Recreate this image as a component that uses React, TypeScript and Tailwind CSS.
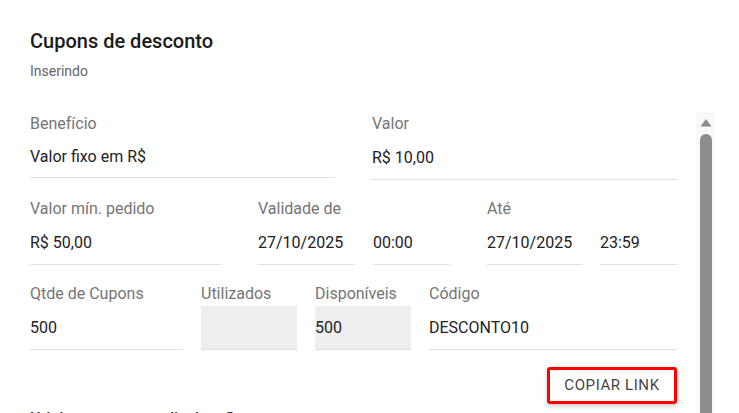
import React from 'react'

const font = { fontFamily: 'Roboto, "Liberation Sans", Arial, sans-serif' }

function Label({ children }: { children?: React.ReactNode }) {
  return (
    <div className="h-5 leading-5 mb-[2px] text-base text-[#757575] whitespace-nowrap">
      {children}
    </div>
  )
}

function Input({ value, disabled, short }: { value?: string; disabled?: boolean; short?: boolean }) {
  return (
    <div
      className={`${short ? 'h-[42px]' : 'h-[44px]'} flex items-center border-b border-[#e0e0e0] text-base leading-5 text-[#222] whitespace-nowrap ${
        disabled ? 'bg-[#eeeeee]' : ''
      }`}
    >
      {value}
    </div>
  )
}

function Field({ label, value, disabled, short }: { label: string; value?: string; disabled?: boolean; short?: boolean }) {
  return (
    <div>
      <Label>{label}</Label>
      <Input value={value} disabled={disabled} short={short} />
    </div>
  )
}

function DateTime({ label, date, time }: { label: string; date: string; time: string }) {
  return (
    <div>
      <Label>{label}</Label>
      <div className="grid grid-cols-[1fr_77px] gap-[18px]">
        <Input value={date} />
        <Input value={time} />
      </div>
    </div>
  )
}

export default function App() {
  return (
    <div className="w-[739px] h-[413px] overflow-hidden bg-white" style={font}>
      {/* Cabeçalho */}
      <div className="pl-[30px] pt-[29px]">
        <h1 className="text-[20px] leading-6 font-medium text-[#1a1a1a]">Cupons de desconto</h1>
        <p className="mt-2 text-sm leading-5 text-[#666]">Inserindo</p>
      </div>

      <div className="flex mt-[31px]">
        {/* Formulário */}
        <div className="w-[647px] ml-[30px] pt-[2px]">
          <div className="grid grid-cols-2 gap-[37px]">
            <Field label="Benefício" value="Valor fixo em R$" short />
            <Field label="Valor" value="R$ 10,00" />
          </div>

          <div className="grid grid-cols-[191px_192px_1fr] gap-[37px] mt-[19px]">
            <Field label="Valor mín. pedido" value="R$ 50,00" />
            <DateTime label="Validade de" date="27/10/2025" time="00:00" />
            <DateTime label="Até" date="27/10/2025" time="23:59" />
          </div>

          <div className="grid grid-cols-[153px_96px_96px_1fr] gap-[18px] mt-[19px]">
            <Field label="Qtde de Cupons" value="500" />
            <Field label="Utilizados" disabled />
            <Field label="Disponíveis" value="500" disabled />
            <Field label="Código" value="DESCONTO10" />
          </div>

          <div className="flex justify-end mt-[17px]">
            <button className="w-[130px] h-[37px] flex items-center justify-center border-[3px] border-[#ff0000] rounded-[3px] bg-white text-[15px] tracking-[0.04em] text-[#444] uppercase shadow-[0_2px_5px_rgba(0,0,0,0.22)]">
              Copiar link
            </button>
          </div>

          <h2 className="mt-[5px] text-base leading-5 font-medium text-[#333]">Url do cupom para divulgação</h2>
        </div>

        {/* Barra de rolagem */}
        <div className="ml-[19px] w-[19px] h-[301px] bg-[#f9f9f9] pt-[6px] pl-[4px] flex flex-col">
          <svg width="12" height="9" viewBox="0 0 12 9" className="block">
            <path d="M6 1 L11.5 8.5 L0.5 8.5 Z" fill="#8c8c8c" />
          </svg>
          <div className="mt-[7px] w-[12px] flex-1 bg-[#8c8c8c] rounded-t-[6px]" />
        </div>
      </div>
    </div>
  )
}
